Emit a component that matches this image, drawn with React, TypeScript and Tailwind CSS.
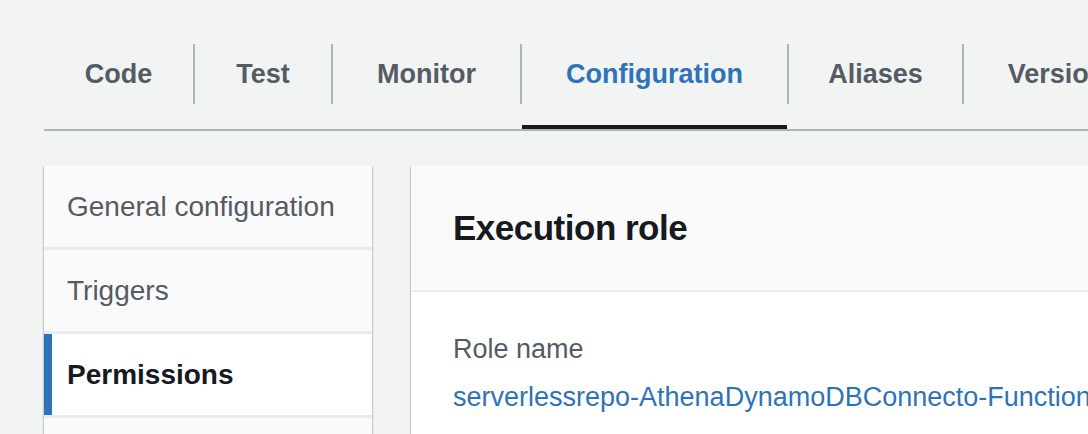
const tabs = [
  { label: 'Code', w: 'w-[149px]' },
  { label: 'Test', w: 'w-[136px]' },
  { label: 'Monitor', w: 'w-[187px]' },
  { label: 'Configuration', w: 'w-[265px]', active: true },
  { label: 'Aliases', w: 'w-[173px]' },
  { label: 'Versions', w: 'w-[200px]' },
];

const sideItems = [
  { label: 'General configuration' },
  { label: 'Triggers' },
  { label: 'Permissions', active: true },
  { label: 'Destinations' },
];

export default function App() {
  return (
    <div
      className="w-[1088px] h-[434px] overflow-hidden bg-[#f2f3f3] pl-[44px]"
      style={{ fontFamily: '"Liberation Sans", Arial, sans-serif' }}
    >
      {/* tab bar */}
      <div className="flex border-b-2 border-[#aab7b8] w-[1200px]">
        {tabs.map((t, i) => (
          <div key={t.label} className="flex shrink-0">
            {i > 0 && <div className="w-[2px] h-[60px] mt-[44px] bg-[#aab7b8]" />}
            <div className={`flex flex-col shrink-0 ${t.w}`}>
              <div
                className={`h-[60px] mt-[44px] flex items-center justify-center text-[27px] font-bold ${
                  t.active ? 'text-[#2e73b8]' : 'text-[#545b64]'
                }`}
              >
                {t.label}
              </div>
              <div className="h-[21px]" />
              <div className={`h-[4px] ${t.active ? 'bg-[#16191f]' : ''}`} />
            </div>
          </div>
        ))}
      </div>

      <div className="flex gap-[39px] mt-[35px]">
        {/* side nav */}
        <div className="w-[328px] shrink-0 flex flex-col gap-[3px] bg-[#eaeded] shadow-[0_1px_1px_0_rgba(0,28,36,0.3),1px_1px_1px_0_rgba(0,28,36,0.15),-1px_1px_1px_0_rgba(0,28,36,0.15)]">
          {sideItems.map((s) => (
            <div
              key={s.label}
              className={`h-[81px] flex items-center text-[28px] ${
                s.active
                  ? 'bg-white border-l-8 border-[#2e73b8] pl-[15px] font-bold text-[#16191f]'
                  : 'bg-[#fafafa] pl-[23px] text-[#545b64]'
              }`}
            >
              {s.label}
            </div>
          ))}
        </div>

        {/* execution role panel */}
        <div className="w-[700px] shrink-0 bg-white shadow-[0_1px_1px_0_rgba(0,28,36,0.3),1px_1px_1px_0_rgba(0,28,36,0.15),-1px_1px_1px_0_rgba(0,28,36,0.15)]">
          <div className="h-[126px] bg-[#fafafa] border-b-2 border-[#eaeded] flex items-center pl-[42px]">
            <h2 className="text-[35px] font-bold text-[#16191f] tracking-[-0.5px]">Execution role</h2>
          </div>
          <div className="pl-[42px] pt-[40px] pb-[40px] whitespace-nowrap overflow-hidden">
            <div className="text-[27px] leading-[34px] text-[#545b64]">Role name</div>
            <div className="mt-[14px] text-[27px] leading-[34px] text-[#2e73b8]">
              serverlessrepo-AthenaDynamoDBConnecto-FunctionRole-1XYZ
            </div>
          </div>
        </div>
      </div>
    </div>
  );
}
